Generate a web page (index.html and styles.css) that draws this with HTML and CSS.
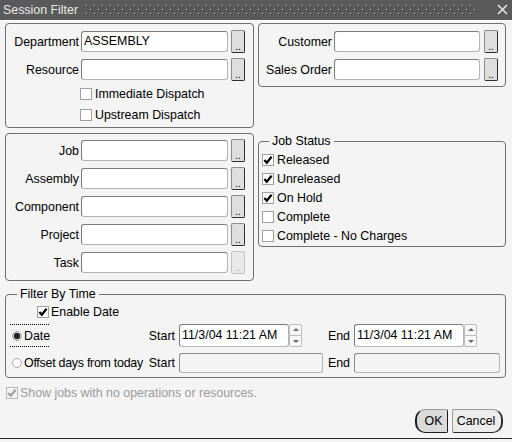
FILE: index.html
```html
<!DOCTYPE html>
<html>
<head>
<meta charset="utf-8">
<title>Session Filter</title>
<link rel="stylesheet" href="styles.css">
</head>
<body>
<div class="titlebar">
  <span class="title">Session Filter</span>
  <svg class="grip" width="392" height="10" viewBox="0 0 392 10">
    <defs>
      <pattern id="gp" width="8" height="8" patternUnits="userSpaceOnUse">
        <rect x="0" y="0" width="1" height="1" fill="#d6d6d6"/>
        <rect x="1" y="1" width="1" height="1" fill="#262626"/>
        <rect x="4" y="4" width="1" height="1" fill="#d6d6d6"/>
        <rect x="5" y="5" width="1" height="1" fill="#262626"/>
      </pattern>
    </defs>
    <rect width="392" height="10" fill="url(#gp)"/>
  </svg>
  <svg class="close" width="11" height="11" viewBox="0 0 11 11">
    <path d="M1 1 L10 10 M10 1 L1 10" stroke="#e4e4e4" stroke-width="1.6" fill="none"/>
  </svg>
</div>

<div class="main">
  <div class="top-grid">
    <div class="panel p-dept">
      <div class="row"><span class="lbl">Department</span><div class="field w147">ASSEMBLY</div><span class="lov">..</span></div>
      <div class="row"><span class="lbl">Resource</span><div class="field w147"></div><span class="lov">..</span></div>
      <div class="chk chk-dept first">
        <svg class="cb" width="12" height="12"><rect x="0.5" y="0.5" width="11" height="11" fill="#fff" stroke="#a0a0a0"/></svg>
        <span>Immediate Dispatch</span>
      </div>
      <div class="chk chk-dept">
        <svg class="cb" width="12" height="12"><rect x="0.5" y="0.5" width="11" height="11" fill="#fff" stroke="#a0a0a0"/></svg>
        <span>Upstream Dispatch</span>
      </div>
    </div>

    <div class="panel p-cust">
      <div class="row"><span class="lbl">Customer</span><div class="field w146"></div><span class="lov lov-r">..</span></div>
      <div class="row"><span class="lbl">Sales Order</span><div class="field w146"></div><span class="lov lov-r">..</span></div>
    </div>

    <div class="panel p-job">
      <div class="row"><span class="lbl">Job</span><div class="field w147"></div><span class="lov">..</span></div>
      <div class="row"><span class="lbl">Assembly</span><div class="field w147"></div><span class="lov">..</span></div>
      <div class="row"><span class="lbl">Component</span><div class="field w147"></div><span class="lov">..</span></div>
      <div class="row"><span class="lbl">Project</span><div class="field w147"></div><span class="lov">..</span></div>
      <div class="row"><span class="lbl">Task</span><div class="field w147"></div><span class="lov lov-dis">..</span></div>
    </div>

    <div class="group p-status">
      <span class="legend">Job Status</span>
      <div class="srow">
        <svg class="cb" width="12" height="12"><rect x="0.5" y="0.5" width="11" height="11" fill="#fff" stroke="#a0a0a0"/><path d="M2.4 6 L4.8 8.8 L9.6 2.8" fill="none" stroke="#000" stroke-width="2.2"/></svg>
        <span>Released</span>
      </div>
      <div class="srow">
        <svg class="cb" width="12" height="12"><rect x="0.5" y="0.5" width="11" height="11" fill="#fff" stroke="#a0a0a0"/><path d="M2.4 6 L4.8 8.8 L9.6 2.8" fill="none" stroke="#000" stroke-width="2.2"/></svg>
        <span>Unreleased</span>
      </div>
      <div class="srow">
        <svg class="cb" width="12" height="12"><rect x="0.5" y="0.5" width="11" height="11" fill="#fff" stroke="#a0a0a0"/><path d="M2.4 6 L4.8 8.8 L9.6 2.8" fill="none" stroke="#000" stroke-width="2.2"/></svg>
        <span>On Hold</span>
      </div>
      <div class="srow">
        <svg class="cb" width="12" height="12"><rect x="0.5" y="0.5" width="11" height="11" fill="#fff" stroke="#a0a0a0"/></svg>
        <span>Complete</span>
      </div>
      <div class="srow">
        <svg class="cb" width="12" height="12"><rect x="0.5" y="0.5" width="11" height="11" fill="#fff" stroke="#a0a0a0"/></svg>
        <span>Complete - No Charges</span>
      </div>
    </div>
  </div>

  <div class="group p-time">
    <span class="legend">Filter By Time</span>
    <div class="chk chk-enable">
      <svg class="cb" width="12" height="12"><rect x="0.5" y="0.5" width="11" height="11" fill="#fff" stroke="#a0a0a0"/><path d="M2.4 6 L4.8 8.8 L9.6 2.8" fill="none" stroke="#000" stroke-width="2.2"/></svg>
      <span>Enable Date</span>
    </div>
    <div class="tgrid">
      <div class="tcell">
        <div class="focus">
          <svg class="rb" width="10" height="10"><circle cx="5" cy="5" r="4.5" fill="#fff" stroke="#9a9a9a"/><circle cx="5" cy="5" r="3.2" fill="#222"/></svg>
          <span>Date</span>
        </div>
      </div>
      <span class="tlbl">Start</span>
      <div class="dt"><div class="field dfield">11/3/04 11:21 AM</div><div class="spin"><span class="up"></span><span class="dn"></span></div></div>
      <span class="tlbl">End</span>
      <div class="dt"><div class="field dfield">11/3/04 11:21 AM</div><div class="spin"><span class="up"></span><span class="dn"></span></div></div>

      <div class="tcell orow">
        <svg class="rb" width="10" height="10"><circle cx="5" cy="5" r="4.5" fill="#fff" stroke="#a8a8a8"/></svg>
        <span class="offset-text">Offset days from today</span>
      </div>
      <span class="tlbl orow">Start</span>
      <div class="field ofield orow"></div>
      <span class="tlbl orow">End</span>
      <div class="field ofield orow"></div>
    </div>
  </div>

  <div class="chk show-row">
    <svg class="cb" width="12" height="12"><rect x="0.5" y="0.5" width="11" height="11" fill="#f4f4f4" stroke="#b8b8b8"/><path d="M2.4 6 L4.8 8.8 L9.6 2.8" fill="none" stroke="#a0a0a0" stroke-width="2.2"/></svg>
    <span>Show jobs with no operations or resources.</span>
  </div>

  <div class="buttons">
    <span class="btn btn-ok">OK</span>
    <span class="btn btn-cancel">Cancel</span>
  </div>
</div>
<div class="bottom-edge"></div>
</body>
</html>
```

FILE: styles.css
```css
* { box-sizing: border-box; }
html, body { margin: 0; padding: 0; }
body {
  width: 512px;
  height: 442px;
  overflow: hidden;
  background: #f4f4f4;
  font-family: "Liberation Sans", Arial, sans-serif;
  font-size: 12.4px;
  color: #000;
}

.titlebar {
  height: 21px;
  background: #5a5a5a;
  display: flex;
  align-items: flex-start;
  color: #e8e8e8;
  border-bottom: 1px solid #ffffff;
}
.title { width: 86px; padding-left: 3px; line-height: 20px; white-space: nowrap; }
.grip { display: block; margin-top: 5px; }
.close { display: block; margin-left: 19px; margin-top: 4px; }

.main { padding: 2px 6px 0 5px; }

.top-grid {
  display: grid;
  grid-template-columns: 249px 248px;
  column-gap: 4px;
  row-gap: 5px;
  align-items: start;
}

.panel { border: 1px solid #6e6e6e; border-radius: 4px; padding-top: 7px; }
.p-dept { height: 105px; }
.p-cust { height: 64px; }
.p-job { height: 148px; padding-top: 6px; }

.row { display: flex; align-items: center; height: 21px; margin-bottom: 7px; }
.lbl { width: 73px; margin-right: 2px; text-align: right; white-space: nowrap; }
.offset-text { white-space: nowrap; letter-spacing: -0.25px; }

.field {
  height: 21px;
  background: #fff;
  border: 1px solid #b4b4b4;
  border-top-color: #7c7c7c;
  border-left-color: #7c7c7c;
  border-radius: 3px;
  padding-left: 2px;
  line-height: 19px;
  white-space: nowrap;
  overflow: hidden;
}
.w147 { width: 147px; }
.w146 { width: 146px; }

.lov {
  width: 14px;
  height: 23px;
  margin-left: 3px;
  margin-top: -1px;
  margin-bottom: -1px;
  background: #dedede;
  border: 1px solid #8c8c8c;
  border-right-color: #2e2e2e;
  border-bottom-color: #2e2e2e;
  border-radius: 2px;
  font-size: 10px;
  line-height: 10px;
  text-align: center;
  padding-top: 11px;
  color: #000;
}
.lov-r { margin-left: 4px; }
.lov-dis { background: #e8e8e8; border-color: #c4c4c4; color: #a8a8a8; }

.chk { display: flex; align-items: center; height: 13px; }
.cb { display: block; flex: none; margin-right: 3px; }
.chk-dept { padding-left: 74px; margin-bottom: 8px; }
.chk-dept.first { margin-top: 4px; }

.group {
  position: relative;
  border: 1px solid #6e6e6e;
  border-radius: 4px;
}
.legend {
  position: absolute;
  top: -8px;
  left: 10px;
  padding: 0 3px;
  background: #f4f4f4;
  line-height: 14px;
}
.p-status { margin-top: 8px; height: 106px; padding: 8px 0 0 3px; }
.srow { display: flex; align-items: center; height: 19px; }

.p-time { margin-top: 13px; height: 84px; padding-top: 10px; }
.p-time .legend { left: 11px; }
.chk-enable { padding-left: 31px; height: 12px; margin-top: 1px; }
.chk-enable .cb { margin-right: 2px; }

.tgrid {
  display: grid;
  grid-template-columns: 142px 31px 144px 31px 146px;
  grid-template-rows: 23px 20px;
  row-gap: 6px;
  margin-top: 6px;
  align-items: center;
}
.tcell { display: flex; align-items: center; height: 100%; }
.focus {
  display: flex;
  align-items: center;
  margin-left: 4px;
  width: 39px;
  height: 23px;
  padding-left: 2px;
  border-top: 1px dotted #000;
  border-bottom: 1px dotted #000;
}
.rb { display: block; flex: none; margin-right: 2px; }
.orow .rb { margin-left: 6px; }
.tlbl { text-align: right; padding-right: 4px; white-space: nowrap; }
.dt { display: flex; height: 23px; }
.dfield { width: 110px; height: 23px; line-height: 21px; }
.spin {
  width: 13px;
  height: 23px;
  display: flex;
  flex-direction: column;
}
.spin span {
  flex: 1;
  border: 1px solid #bcbcbc;
  background: #f8f8f8;
  position: relative;
}
.spin .up { border-radius: 2px 2px 0 0; }
.spin .dn { border-top: none; border-radius: 0 0 2px 2px; }
.spin .up::after, .spin .dn::after {
  content: "";
  position: absolute;
  left: 3px;
  top: 3px;
  border-left: 3px solid transparent;
  border-right: 3px solid transparent;
}
.spin .up::after { border-bottom: 3px solid #6a6a6a; }
.spin .dn::after { border-top: 3px solid #6a6a6a; top: 4px; }
.ofield { background: transparent; border-color: #b4b4b4; border-top-color: #8c8c8c; border-left-color: #8c8c8c; height: 20px; }

.show-row { margin-top: 9px; height: 12px; padding-left: 1px; color: #9a9a9a; }
.show-row .cb { margin-right: 2px; }

.buttons {
  display: flex;
  justify-content: flex-end;
  gap: 4px;
  margin-top: 10px;
  padding-right: 3px;
}
.btn {
  height: 24px;
  line-height: 22px;
  text-align: center;
}
.btn-ok {
  width: 33px;
  background: #dadada;
  border: 1px solid #9a9a9a;
  border-left: 2px solid #1e1e1e;
  border-right: 1px solid #1e1e1e;
  border-bottom: 1px solid #1e1e1e;
  border-radius: 10px 2px 2px 10px;
  padding-left: 3px;
}
.btn-cancel {
  width: 51px;
  background: #ececec;
  border: 1px solid #9a9a9a;
  border-right: 2px solid #2e2e2e;
  border-bottom: 1px solid #2e2e2e;
  border-radius: 2px 10px 10px 2px;
  padding-right: 2px;
}

.bottom-edge {
  margin-top: 5px;
  height: 4px;
  border-top: 1px solid #2a2a2a;
  background: #f4f4f4;
}
```
